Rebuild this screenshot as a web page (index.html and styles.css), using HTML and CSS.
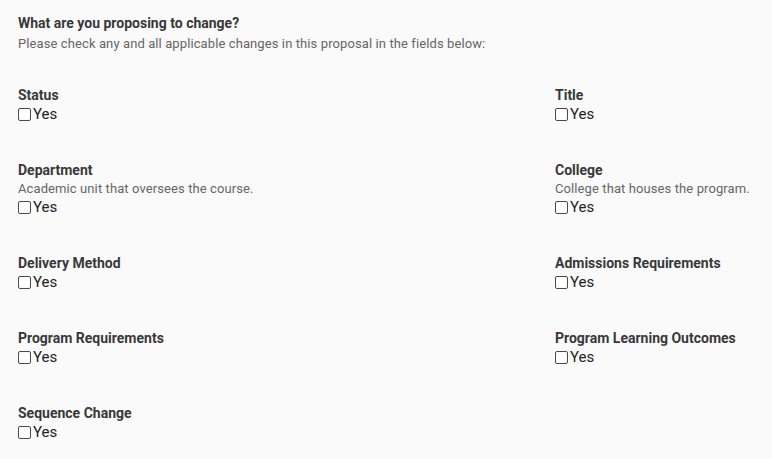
FILE: index.html
```html
<!DOCTYPE html>
<html lang="en">
<head>
<meta charset="utf-8">
<title>Proposed changes</title>
<link rel="stylesheet" href="styles.css">
</head>
<body>
<div class="page">
  <div class="intro">
    <div class="heading">What are you proposing to change?</div>
    <div class="sub">Please check any and all applicable changes in this proposal in the fields below:</div>
  </div>
  <div class="grid">
    <div class="field">
      <div class="label">Status</div>
      <label class="yes"><input type="checkbox">Yes</label>
    </div>
    <div class="field">
      <div class="label">Title</div>
      <label class="yes"><input type="checkbox">Yes</label>
    </div>
    <div class="field">
      <div class="label">Department</div>
      <div class="desc">Academic unit that oversees the course.</div>
      <label class="yes"><input type="checkbox">Yes</label>
    </div>
    <div class="field">
      <div class="label">College</div>
      <div class="desc">College that houses the program.</div>
      <label class="yes"><input type="checkbox">Yes</label>
    </div>
    <div class="field">
      <div class="label">Delivery Method</div>
      <label class="yes"><input type="checkbox">Yes</label>
    </div>
    <div class="field">
      <div class="label">Admissions Requirements</div>
      <label class="yes"><input type="checkbox">Yes</label>
    </div>
    <div class="field">
      <div class="label">Program Requirements</div>
      <label class="yes"><input type="checkbox">Yes</label>
    </div>
    <div class="field">
      <div class="label">Program Learning Outcomes</div>
      <label class="yes"><input type="checkbox">Yes</label>
    </div>
    <div class="field">
      <div class="label">Sequence Change</div>
      <label class="yes"><input type="checkbox">Yes</label>
    </div>
  </div>
</div>
</body>
</html>
```

FILE: styles.css
```css
html, body {
  margin: 0;
  padding: 0;
  background: #fafafa;
}
body {
  font-family: Roboto, "Liberation Sans", Arial, sans-serif;
  color: #333;
}
.page {
  padding: 13px 18px 0 18px;
}
.heading {
  font-size: 14px;
  font-weight: 700;
  line-height: 20px;
  color: #383838;
}
.sub {
  font-size: 13px;
  letter-spacing: 0.1px;
  line-height: 22px;
  color: #666;
}
.intro {
  margin-bottom: 31px;
}
.grid {
  display: grid;
  grid-template-columns: 1fr 199px;
  row-gap: 38px;
}
.label {
  font-size: 14px;
  font-weight: 700;
  line-height: 18px;
  color: #383838;
}
.desc {
  font-size: 13px;
  letter-spacing: 0.1px;
  line-height: 17px;
  padding-top: 1px;
  color: #666;
}
.yes {
  display: flex;
  align-items: center;
  padding-top: 1px;
  font-size: 15px;
  line-height: 18px;
  color: #222;
}
.yes input {
  appearance: none;
  -webkit-appearance: none;
  box-sizing: border-box;
  margin: 0 2px 0 0;
  width: 13px;
  height: 13px;
  border: 1px solid #4a4a4a;
  border-radius: 2px;
  background: #fff;
}
```
